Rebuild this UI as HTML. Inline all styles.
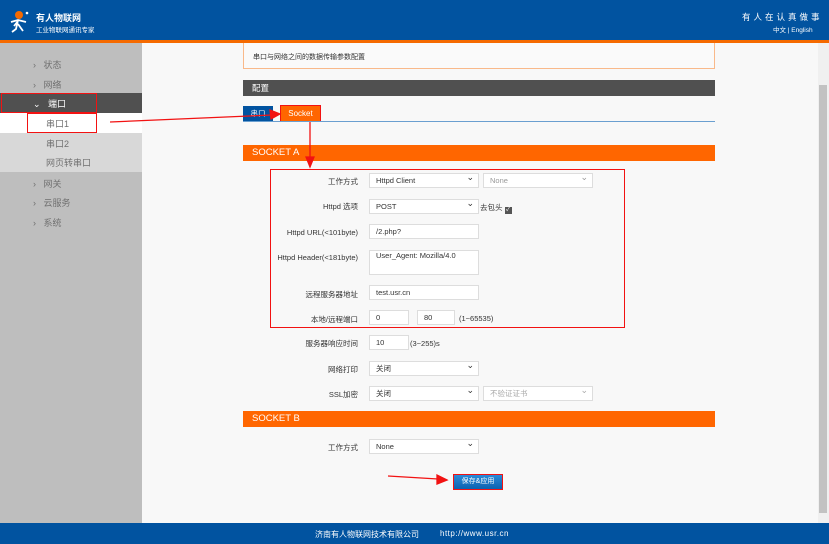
<!DOCTYPE html>
<html><head><meta charset="utf-8"><style>
*{margin:0;padding:0;box-sizing:border-box}
body{width:829px;height:544px;overflow:hidden;background:#f8f8f8;font-family:"Liberation Sans","Noto Sans CJK SC",sans-serif;font-size:8px;color:#333;position:relative}
.a{position:absolute}
.hdr{left:0;top:0;width:829px;height:40px;background:#0153a0}
.org{left:0;top:40px;width:829px;height:3px;background:#f56a00}
.side{left:0;top:43px;width:142px;height:480px;background:#bebebe}
.si{position:absolute;left:33px;font-size:9px;color:#707070}
.ft{left:0;top:523px;width:829px;height:21px;background:#0153a0;color:#fff;font-size:8px}
.bar{background:#505050;color:#fff;font-size:8.5px;padding-left:9px;line-height:16px}
.ob{background:#ff6600;color:#fff;font-size:9.5px;padding-left:9px;line-height:16px}
.lbl{position:absolute;width:120px;left:238px;text-align:right;font-size:7.5px;color:#333}
.in{position:absolute;background:#fff;border:1px solid #ddd;font-size:7.5px;padding-left:6px;color:#333}
.sel::after{content:"⌄";position:absolute;right:4px;top:-3px;font-size:9px}
.rb{border:1.5px solid #f21212}
</style></head><body>
<div class="a hdr"></div>
<svg class="a" style="left:8px;top:10px" width="26" height="24"><circle cx="11" cy="5" r="4" fill="#f56a00"/><path d="M3 12 L10 10 L18 12 M10 10 L8 19 L4 22 M10 14 L15 21 M10 11 L6 16" stroke="#fff" stroke-width="1.8" fill="none"/><circle cx="19" cy="3" r="1.3" fill="#fff"/></svg>
<div class="a" style="left:36px;top:11px;color:#fff;font-size:9px;font-weight:bold">有人物联网</div>
<div class="a" style="left:36px;top:24px;color:#fff;font-size:6.5px">工业物联网通讯专家</div>
<div class="a" style="left:742px;top:11px;color:#fff;font-size:8.5px;letter-spacing:3px">有人在认真做事</div>
<div class="a" style="left:773px;top:24px;color:#fff;font-size:6.5px">中文 | English</div>
<div class="a org"></div>
<div class="a side"></div>
<div class="a" style="left:0;top:93px;width:142px;height:20px;background:#505050"></div>
<div class="a" style="left:0;top:113px;width:142px;height:20px;background:#fff"></div>
<div class="a" style="left:0;top:133px;width:142px;height:39px;background:#d8d8d8"></div>
<div class="si" style="top:58px">›&nbsp;&nbsp; 状态</div>
<div class="si" style="top:78px">›&nbsp;&nbsp; 网络</div>
<div class="si" style="top:97px;color:#fff">⌄&nbsp;&nbsp; 端口</div>
<div class="si" style="top:117px;left:46px">串口1</div>
<div class="si" style="top:137px;left:46px">串口2</div>
<div class="si" style="top:156px;left:46px">网页转串口</div>
<div class="si" style="top:177px">›&nbsp;&nbsp; 网关</div>
<div class="si" style="top:196px">›&nbsp;&nbsp; 云服务</div>
<div class="si" style="top:216px">›&nbsp;&nbsp; 系统</div>
<div class="a rb" style="left:1px;top:93px;width:96px;height:20px"></div>
<div class="a rb" style="left:27px;top:113px;width:70px;height:20px"></div>
<div class="a" style="left:818px;top:43px;width:11px;height:480px;background:#f0f0f0"></div>
<div class="a" style="left:819px;top:85px;width:8px;height:428px;background:#c2c2c2"></div>
<div class="a" style="left:243px;top:43px;width:472px;height:26px;border:1px solid #f9b98a;border-top:none;background:#fafafa;font-size:7px;padding:9px 0 0 9px">串口与网络之间的数据传输参数配置</div>
<div class="a bar" style="left:243px;top:80px;width:472px;height:16px">配置</div>
<div class="a" style="left:243px;top:106px;width:30px;height:15px;background:#0153a0;color:#fff;font-size:7.5px;text-align:center;line-height:15px">串口</div>
<div class="a" style="left:281px;top:106px;width:39px;height:15px;background:#ff6600;color:#fff;font-size:8px;text-align:center;line-height:15px">Socket</div>
<div class="a rb" style="left:280px;top:105px;width:41px;height:17px"></div>
<div class="a" style="left:243px;top:121px;width:472px;height:1px;background:#6a9fd0"></div>
<div class="a ob" style="left:243px;top:145px;width:472px;height:16px">SOCKET A</div>
<div class="a rb" style="left:270px;top:169px;width:355px;height:159px"></div>
<div class="lbl" style="top:176px">工作方式</div>
<div class="in sel" style="left:369px;top:173px;width:110px;height:15px;line-height:13px">Httpd Client</div>
<div class="in sel" style="left:483px;top:173px;width:110px;height:15px;line-height:13px;color:#999">None</div>
<div class="lbl" style="top:201px">Httpd 选项</div>
<div class="in sel" style="left:369px;top:199px;width:110px;height:15px;line-height:13px">POST</div>
<div class="a" style="left:480px;top:202px;font-size:7.5px">去包头 <span style="display:inline-block;width:7px;height:7px;background:#555;vertical-align:-1px;color:#fff;font-size:6px;line-height:7px;text-align:center">✓</span></div>
<div class="lbl" style="top:228px">Httpd URL(&lt;101byte)</div>
<div class="in" style="left:369px;top:224px;width:110px;height:15px;line-height:13px">/2.php?</div>
<div class="lbl" style="top:253px">Httpd Header(&lt;181byte)</div>
<div class="in" style="left:369px;top:250px;width:110px;height:25px;line-height:10px">User_Agent: Mozilla/4.0</div>
<div class="lbl" style="top:289px">远程服务器地址</div>
<div class="in" style="left:369px;top:285px;width:110px;height:15px;line-height:13px">test.usr.cn</div>
<div class="lbl" style="top:314px">本地/远程端口</div>
<div class="in" style="left:369px;top:310px;width:40px;height:15px;line-height:13px">0</div>
<div class="in" style="left:417px;top:310px;width:38px;height:15px;line-height:13px">80</div>
<div class="a" style="left:459px;top:314px;font-size:7.5px">(1~65535)</div>
<div class="lbl" style="top:338px">服务器响应时间</div>
<div class="in" style="left:369px;top:335px;width:40px;height:15px;line-height:13px">10</div>
<div class="a" style="left:410px;top:339px;font-size:7.5px">(3~255)s</div>
<div class="lbl" style="top:364px">网络打印</div>
<div class="in sel" style="left:369px;top:361px;width:110px;height:15px;line-height:13px">关闭</div>
<div class="lbl" style="top:389px">SSL加密</div>
<div class="in sel" style="left:369px;top:386px;width:110px;height:15px;line-height:13px">关闭</div>
<div class="in sel" style="left:483px;top:386px;width:110px;height:15px;line-height:13px;color:#aaa">不验证证书</div>
<div class="a ob" style="left:243px;top:411px;width:472px;height:16px">SOCKET B</div>
<div class="lbl" style="top:442px">工作方式</div>
<div class="in sel" style="left:369px;top:439px;width:110px;height:15px;line-height:13px">None</div>
<div class="a" style="left:454px;top:475px;width:48px;height:14px;background:linear-gradient(#2a8ad8,#0d62b0);color:#fff;font-size:7px;text-align:center;line-height:14px">保存&amp;应用</div>
<div class="a rb" style="left:453px;top:474px;width:50px;height:16px"></div>
<svg class="a" style="left:0;top:0" width="829" height="544">
<g stroke="#f21212" fill="#f21212" stroke-width="1.3">
<line x1="110" y1="122" x2="272" y2="115"/><polygon points="280,114 270,110 271,119"/>
<line x1="310" y1="122" x2="310" y2="158"/><polygon points="310,167 306,157 314,157"/>
<line x1="388" y1="476" x2="438" y2="479"/><polygon points="447,480 437,475 437,484"/>
</g></svg>
<div class="a ft"><span style="position:absolute;left:315px;top:6px">济南有人物联网技术有限公司</span><span style="position:absolute;left:440px;top:6px;letter-spacing:.5px">http://www.usr.cn</span></div>
</body></html>
